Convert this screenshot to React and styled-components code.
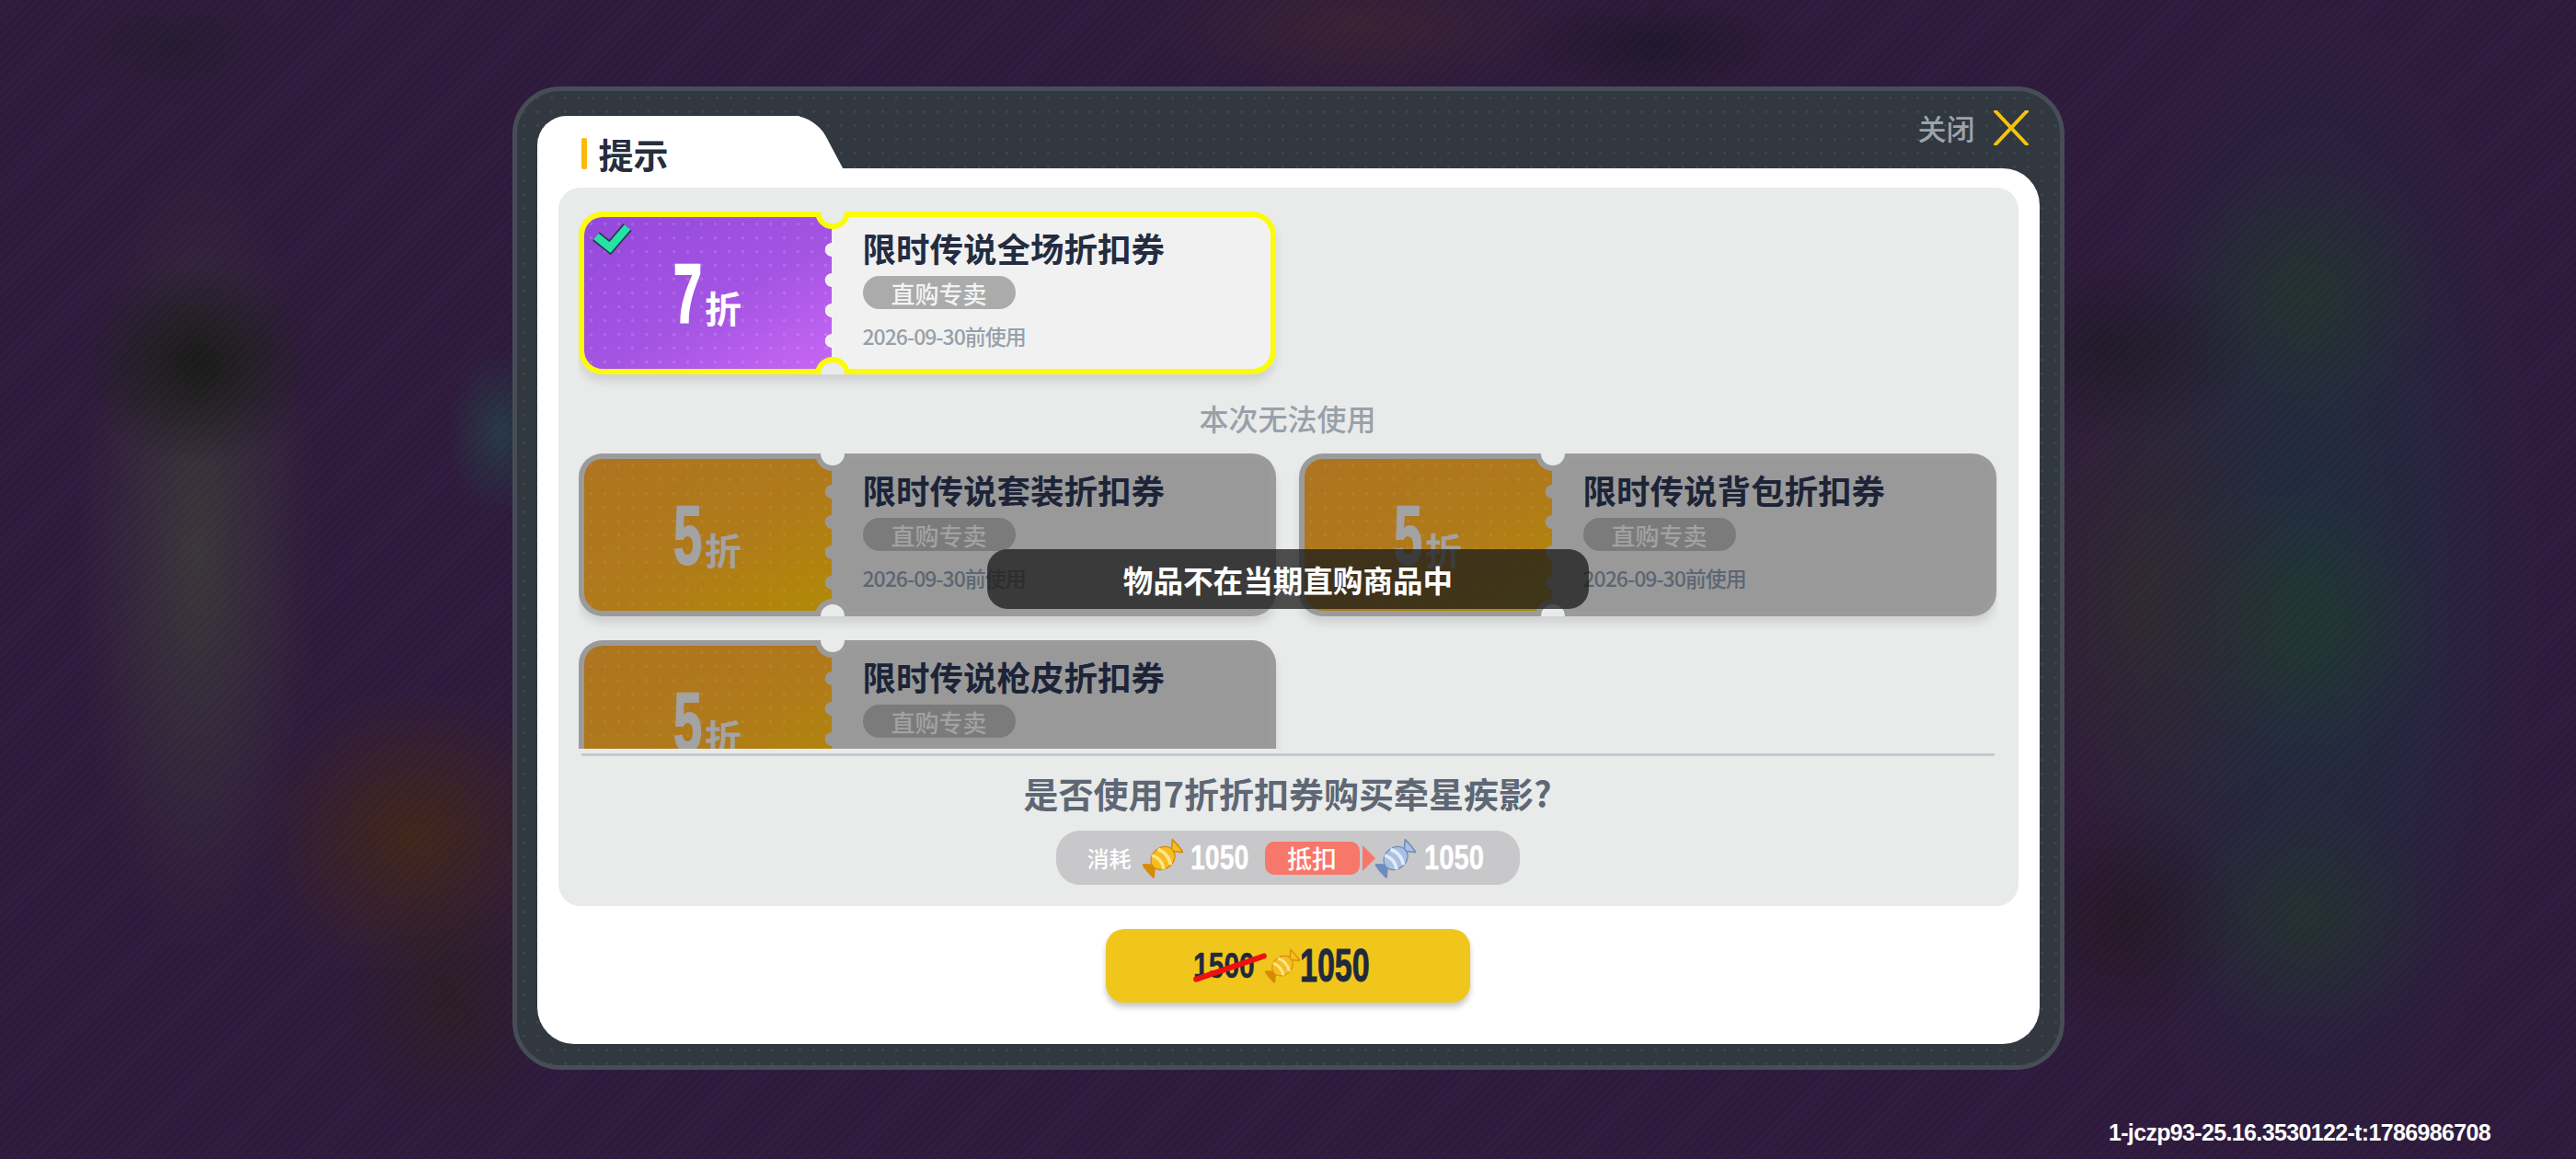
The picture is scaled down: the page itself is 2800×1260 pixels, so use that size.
import React from "react"
import styled, { createGlobalStyle } from "styled-components"

const CJK = `"Noto Sans CJK SC", "Noto Sans", sans-serif`
const NUM = `"Liberation Sans", "Noto Sans CJK SC", sans-serif`

const Global = createGlobalStyle`
  html, body {
    margin: 0;
    padding: 0;
    background: #2d1b3c;
  }
  * {
    box-sizing: border-box;
  }
`

const Page = styled.div`
  position: relative;
  width: 2800px;
  height: 1260px;
  overflow: hidden;
  display: flex;
  align-items: center;
  justify-content: center;
  font-family: ${CJK};
  background:
    repeating-linear-gradient(135deg, rgba(255, 255, 255, 0.008) 0 3px, rgba(0, 0, 0, 0.025) 3px 7px),
    radial-gradient(ellipse 130px 110px at 215px 395px, rgba(24, 26, 22, 0.95), transparent),
    radial-gradient(ellipse 120px 60px at 190px 50px, rgba(30, 28, 40, 0.5), transparent),
    radial-gradient(ellipse 130px 430px at 215px 600px, rgba(62, 60, 58, 0.85), transparent),
    radial-gradient(ellipse 120px 130px at 490px 1090px, rgba(42, 32, 24, 0.6), transparent),
    radial-gradient(ellipse 170px 160px at 450px 910px, rgba(70, 42, 18, 0.8), transparent),
    radial-gradient(ellipse 60px 90px at 545px 470px, rgba(36, 70, 78, 0.7), transparent),
    radial-gradient(ellipse 130px 130px at 2310px 1000px, rgba(32, 24, 24, 0.6), transparent),
    radial-gradient(ellipse 150px 100px at 2300px 380px, rgba(26, 26, 30, 0.6), transparent),
    radial-gradient(ellipse 170px 320px at 2330px 650px, rgba(50, 46, 44, 0.7), transparent),
    radial-gradient(ellipse 150px 150px at 2505px 320px, rgba(34, 62, 36, 0.55), transparent),
    radial-gradient(ellipse 150px 150px at 2505px 680px, rgba(34, 62, 36, 0.55), transparent),
    radial-gradient(ellipse 150px 130px at 2505px 1000px, rgba(34, 62, 36, 0.5), transparent),
    radial-gradient(ellipse 250px 640px at 2510px 640px, rgba(24, 56, 66, 0.7), transparent),
    radial-gradient(ellipse 220px 70px at 1480px 30px, rgba(80, 50, 35, 0.35), transparent),
    radial-gradient(ellipse 160px 60px at 1800px 50px, rgba(20, 20, 30, 0.5), transparent),
    #2f1b3d;
`

const Version = styled.div`
  position: absolute;
  right: 93px;
  bottom: 14px;
  font-family: "Liberation Sans", Arial, sans-serif;
  font-weight: 700;
  font-size: 25px;
  letter-spacing: -0.65px;
  color: #fff;
`

const Modal = styled.div`
  width: 1687px;
  height: 1069px;
  margin-top: -3px;
  border: 5px solid #474d56;
  border-radius: 52px;
  padding: 27px 22px 23px;
  display: flex;
  flex-direction: column;
  background:
    radial-gradient(circle, rgba(255, 255, 255, 0.07) 1.2px, transparent 1.8px) 0 0 / 15px 15px,
    #313840;
`

const Header = styled.div`
  height: 57px;
  display: flex;
  align-items: flex-start;
  justify-content: space-between;
`

const Tab = styled.div`
  position: relative;
  width: 285px;
  height: 57px;
  background: #fff;
  border-radius: 32px 0 0 0;
  display: flex;
  align-items: flex-start;
  padding: 24px 0 0 48px;
  gap: 13px;

  &::after {
    content: "";
    position: absolute;
    top: 0;
    right: -32px;
    width: 64px;
    height: 57px;
    background: #fff;
    border-radius: 0 22px 0 0;
    transform: skewX(28deg);
  }
`

const TabBar = styled.span`
  width: 6px;
  height: 34px;
  border-radius: 2px;
  background: #fbb80d;
`

const TabTitle = styled.span`
  font-size: 38px;
  line-height: 34px;
  font-weight: 700;
  color: #262e3e;
`

const Close = styled.div`
  display: flex;
  align-items: center;
  gap: 20px;
  padding: 0 12px 0 0;
  margin-top: -8px;
  font-size: 31px;
  line-height: 42px;
  font-weight: 500;
  color: #9da3a9;
`

const Body = styled.div`
  flex: 1;
  min-height: 0;
  background: #fff;
  border-radius: 0 40px 40px 40px;
  padding: 21px 23px 0;
  display: flex;
  flex-direction: column;
  align-items: center;
`

const Panel = styled.div`
  width: 100%;
  height: 781px;
  border-radius: 24px;
  background: #e8ebea;
  padding: 26px 23px 22px 22px;
  display: flex;
  flex-direction: column;
  align-items: center;
`

const List = styled.div`
  width: 100%;
  height: 584px;
  overflow: hidden;
  flex-shrink: 0;
`

const Grid = styled.div`
  display: grid;
  grid-template-columns: 758px 758px;
  column-gap: 25px;
  row-gap: 26px;
`

const Unusable = styled.div`
  height: 86px;
  padding-top: 8px;
  display: flex;
  align-items: center;
  justify-content: center;
  font-size: 32px;
  font-weight: 500;
  color: #99a0a8;
`

const TicketBox = styled.div`
  position: relative;
  height: 177px;
  padding: 6px;
  overflow: hidden;
  border-radius: 26px;
  background: ${p => (p.$active ? "#fbfb0a" : "#9b9b9b")};
`

const TicketShadow = styled.div`
  border-radius: 26px;
  box-shadow: 0 8px 10px rgba(0, 0, 0, 0.1);
`

const TicketInner = styled.div`
  height: 100%;
  display: flex;
  overflow: hidden;
  border-radius: 20px;
  background: ${p => (p.$active ? "#f1f1f2" : "#999999")};
`

const Stub = styled.div`
  position: relative;
  width: 269px;
  flex-shrink: 0;
  display: flex;
  align-items: center;
  justify-content: center;
  background:
    radial-gradient(circle, rgba(255, 255, 255, ${p => (p.$active ? 0.13 : 0.06)}) 1.5px, transparent 2.2px) 0 0 / 15px 15px,
    ${p => (p.$active
      ? "linear-gradient(150deg, #9448dc 0%, #a454e2 55%, #c766f6 100%)"
      : "linear-gradient(150deg, #ae7420 0%, #b07a1a 55%, #b18a05 100%)")};
`

const Scallops = styled.div`
  position: absolute;
  right: 0;
  top: 19px;
  width: 8px;
  height: 132px;
  background: radial-gradient(circle at 100% 50%, ${p => (p.$active ? "#f1f1f2" : "#999999")} 7px, transparent 7.6px) 0 0 / 8px 33px;
`

const Notch = styled.span`
  position: absolute;
  left: 257px;
  ${p => (p.$bottom ? "bottom: -19px;" : "top: -19px;")}
  width: 38px;
  height: 38px;
  border-radius: 50%;
  background: #e8ebea;
  border: 6px solid ${p => (p.$active ? "#fbfb0a" : "#9b9b9b")};
`

const Check = styled.svg`
  position: absolute;
  left: 8px;
  top: 6px;
`

const Discount = styled.div`
  display: flex;
  align-items: flex-end;
  gap: 3px;
  color: ${p => (p.$active ? "#fff" : "#a3a3a3")};
`

// digits in the game font are condensed, so squeeze a bold sans to fit
const Digits = styled.span`
  display: inline-block;
  flex-shrink: 0;
  width: ${p => p.$w}px;
  font-family: ${NUM};
  font-weight: 700;
  font-size: ${p => p.$size}px;
  line-height: 1;
  white-space: nowrap;
  -webkit-text-stroke: ${p => p.$stroke || 0}px currentColor;
  transform: scaleX(${p => p.$scale});
  transform-origin: 0 50%;
`

const DiscountUnit = styled.span`
  font-size: 40px;
  line-height: 48px;
  margin-bottom: 6px;
  font-weight: 700;
`

const TicketMain = styled.div`
  flex: 1;
  padding: 9px 0 0 34px;
  display: flex;
  flex-direction: column;
  align-items: flex-start;
`

const TicketTitle = styled.div`
  font-size: 36.5px;
  line-height: 50px;
  font-weight: 700;
  color: ${p => (p.$active ? "#242c40" : "#1d2438")};
`

const Tag = styled.div`
  margin-top: 5px;
  width: 166px;
  height: 36px;
  border-radius: 18px;
  display: flex;
  align-items: center;
  justify-content: center;
  font-size: 26px;
  font-weight: 500;
  background: ${p => (p.$active ? "#ababab" : "#7b7b7b")};
  color: ${p => (p.$active ? "#f4f4f4" : "#a2a2a2")};
`

const Expire = styled.div`
  margin-top: 14px;
  font-size: 23px;
  line-height: 30px;
  font-weight: 500;
  letter-spacing: -1px;
  color: ${p => (p.$active ? "#97a0a8" : "#5c6673")};
`

const Divider = styled.div`
  align-self: stretch;
  height: 3px;
  margin: 5px 3px 0;
  background: #c5c8d1;
  flex-shrink: 0;
`

const Question = styled.div`
  margin-top: 15px;
  font-size: 38px;
  line-height: 50px;
  font-weight: 700;
  color: #5f6774;
`

const CostPill = styled.div`
  margin-top: 16px;
  width: 504px;
  height: 59px;
  border-radius: 26px;
  background: #c8c7ca;
  display: flex;
  align-items: center;
  padding-left: 34px;
  color: #fff;
`

const CostLabel = styled.span`
  font-size: 24px;
  font-weight: 500;
  white-space: nowrap;
  margin-right: 12px;
`

const CostNum = styled.span`
  display: flex;
  margin-left: ${p => p.$ml}px;
`

const Deduct = styled.span`
  margin-left: 18px;
  width: 103px;
  height: 36px;
  border-radius: 10px;
  background: #f7776a;
  display: flex;
  align-items: center;
  justify-content: center;
  font-size: 27px;
  font-weight: 500;
`

const Arrow = styled.span`
  margin-left: 3px;
  border-left: 14px solid #f7776a;
  border-top: 14px solid transparent;
  border-bottom: 14px solid transparent;
`

const BuyButton = styled.button`
  margin-top: 25px;
  width: 396px;
  height: 80px;
  border: 0;
  border-radius: 20px;
  background: #f1c61c;
  box-shadow: 0 5px 6px rgba(0, 0, 0, 0.22);
  display: flex;
  align-items: center;
  justify-content: center;
  padding: 0 14px 0 0;
  color: #1f2a3c;
`

const OldPrice = styled.span`
  position: relative;
  display: flex;
  margin-right: 11px;

  &::after {
    content: "";
    position: absolute;
    left: -2px;
    width: 84px;
    top: 50%;
    height: 6px;
    margin-top: -1px;
    border-radius: 3px;
    background: #ee1010;
    transform: rotate(-19deg);
  }
`

function Candy({ size = 44, blue }) {
  const main = blue ? "#a9c0e2" : "#f6bd22"
  const dark = blue ? "#6e8cbc" : "#d68a08"
  const light = blue ? "#e3ecf8" : "#ffe48a"
  return (
    <svg width={size} height={size} viewBox="0 0 44 44">
      <g transform="rotate(-40 22 22)">
        <path d="M10 22 L1 14 Q0 22 1 31 Z" fill={dark} stroke={dark} strokeWidth="2.5" strokeLinejoin="round" />
        <path d="M34 22 L43 13 Q44 22 43 31 Z" fill={main} stroke={dark} strokeWidth="1.5" strokeLinejoin="round" />
        <ellipse cx="22" cy="22" rx="14" ry="11.5" fill={main} stroke={dark} strokeWidth="1.2" />
        <path d="M15 12 Q21 22 15 32 M24 11 Q30 22 24 33" fill="none" stroke={light} strokeWidth="3.6" />
      </g>
    </svg>
  )
}

function Ticket({ active, discount, title }) {
  return (
    <TicketShadow>
      <TicketBox $active={active}>
        <TicketInner $active={active}>
          <Stub $active={active}>
            <Scallops $active={active} />
            <Discount $active={active}>
              <Digits $size={90} $scale={0.62} $w={31} $stroke={2}>{discount}</Digits>
              <DiscountUnit>折</DiscountUnit>
            </Discount>
          </Stub>
          <TicketMain>
            <TicketTitle $active={active}>{title}</TicketTitle>
            <Tag $active={active}>直购专卖</Tag>
            <Expire $active={active}>2026-09-30前使用</Expire>
          </TicketMain>
        </TicketInner>
        <Notch $active={active} />
        <Notch $active={active} $bottom />
        {active && (
          <Check width="56" height="44" viewBox="0 0 56 44">
            <path d="M11 21 L26 33 L45 11" fill="none" stroke="#2c3a4a" strokeWidth="12" />
            <path d="M11 21 L26 33 L45 11" fill="none" stroke="#25e3a5" strokeWidth="8.5" />
          </Check>
        )}
      </TicketBox>
    </TicketShadow>
  )
}

const Toast = styled.div`
  position: absolute;
  left: 1073px;
  top: 597px;
  width: 654px;
  height: 65px;
  border-radius: 22px;
  background: rgba(28, 28, 28, 0.76);
  color: #fff;
  display: flex;
  align-items: center;
  justify-content: center;
  font-size: 32.6px;
  font-weight: 700;
`

export default function App() {
  return (
    <Page>
      <Global />
      <Modal>
        <Header>
          <Tab>
            <TabBar />
            <TabTitle>提示</TabTitle>
          </Tab>
          <Close>
            关闭
            <svg width="38" height="38" viewBox="0 0 38 38">
              <path d="M2 1 L36 37 M36 1 L2 37" stroke="#f6c309" strokeWidth="4" strokeLinecap="round" />
            </svg>
          </Close>
        </Header>
        <Body>
          <Panel>
            <List>
              <Grid>
                <Ticket active discount="7" title="限时传说全场折扣券" />
              </Grid>
              <Unusable>本次无法使用</Unusable>
              <Grid>
                <Ticket discount="5" title="限时传说套装折扣券" />
                <Ticket discount="5" title="限时传说背包折扣券" />
                <Ticket discount="5" title="限时传说枪皮折扣券" />
              </Grid>
            </List>
            <Divider />
            <Question>是否使用7折折扣券购买牵星疾影?</Question>
            <CostPill>
              <CostLabel>消耗</CostLabel>
              <Candy />
              <CostNum $ml={8}>
                <Digits $size={37} $scale={0.77} $w={63} $stroke={0.4}>1050</Digits>
              </CostNum>
              <Deduct>抵扣</Deduct>
              <Arrow />
              <Candy blue />
              <CostNum $ml={9}>
                <Digits $size={37} $scale={0.79} $w={66} $stroke={0.4}>1050</Digits>
              </CostNum>
            </CostPill>
          </Panel>
          <BuyButton>
            <OldPrice>
              <Digits $size={38} $scale={0.79} $w={67} $stroke={0.5}>1500</Digits>
            </OldPrice>
            <Candy size={38} />
            <Digits $size={50} $scale={0.68} $w={76} $stroke={1}>1050</Digits>
          </BuyButton>
        </Body>
      </Modal>
      <Toast>物品不在当期直购商品中</Toast>
      <Version>1-jczp93-25.16.3530122-t:1786986708</Version>
    </Page>
  )
}
